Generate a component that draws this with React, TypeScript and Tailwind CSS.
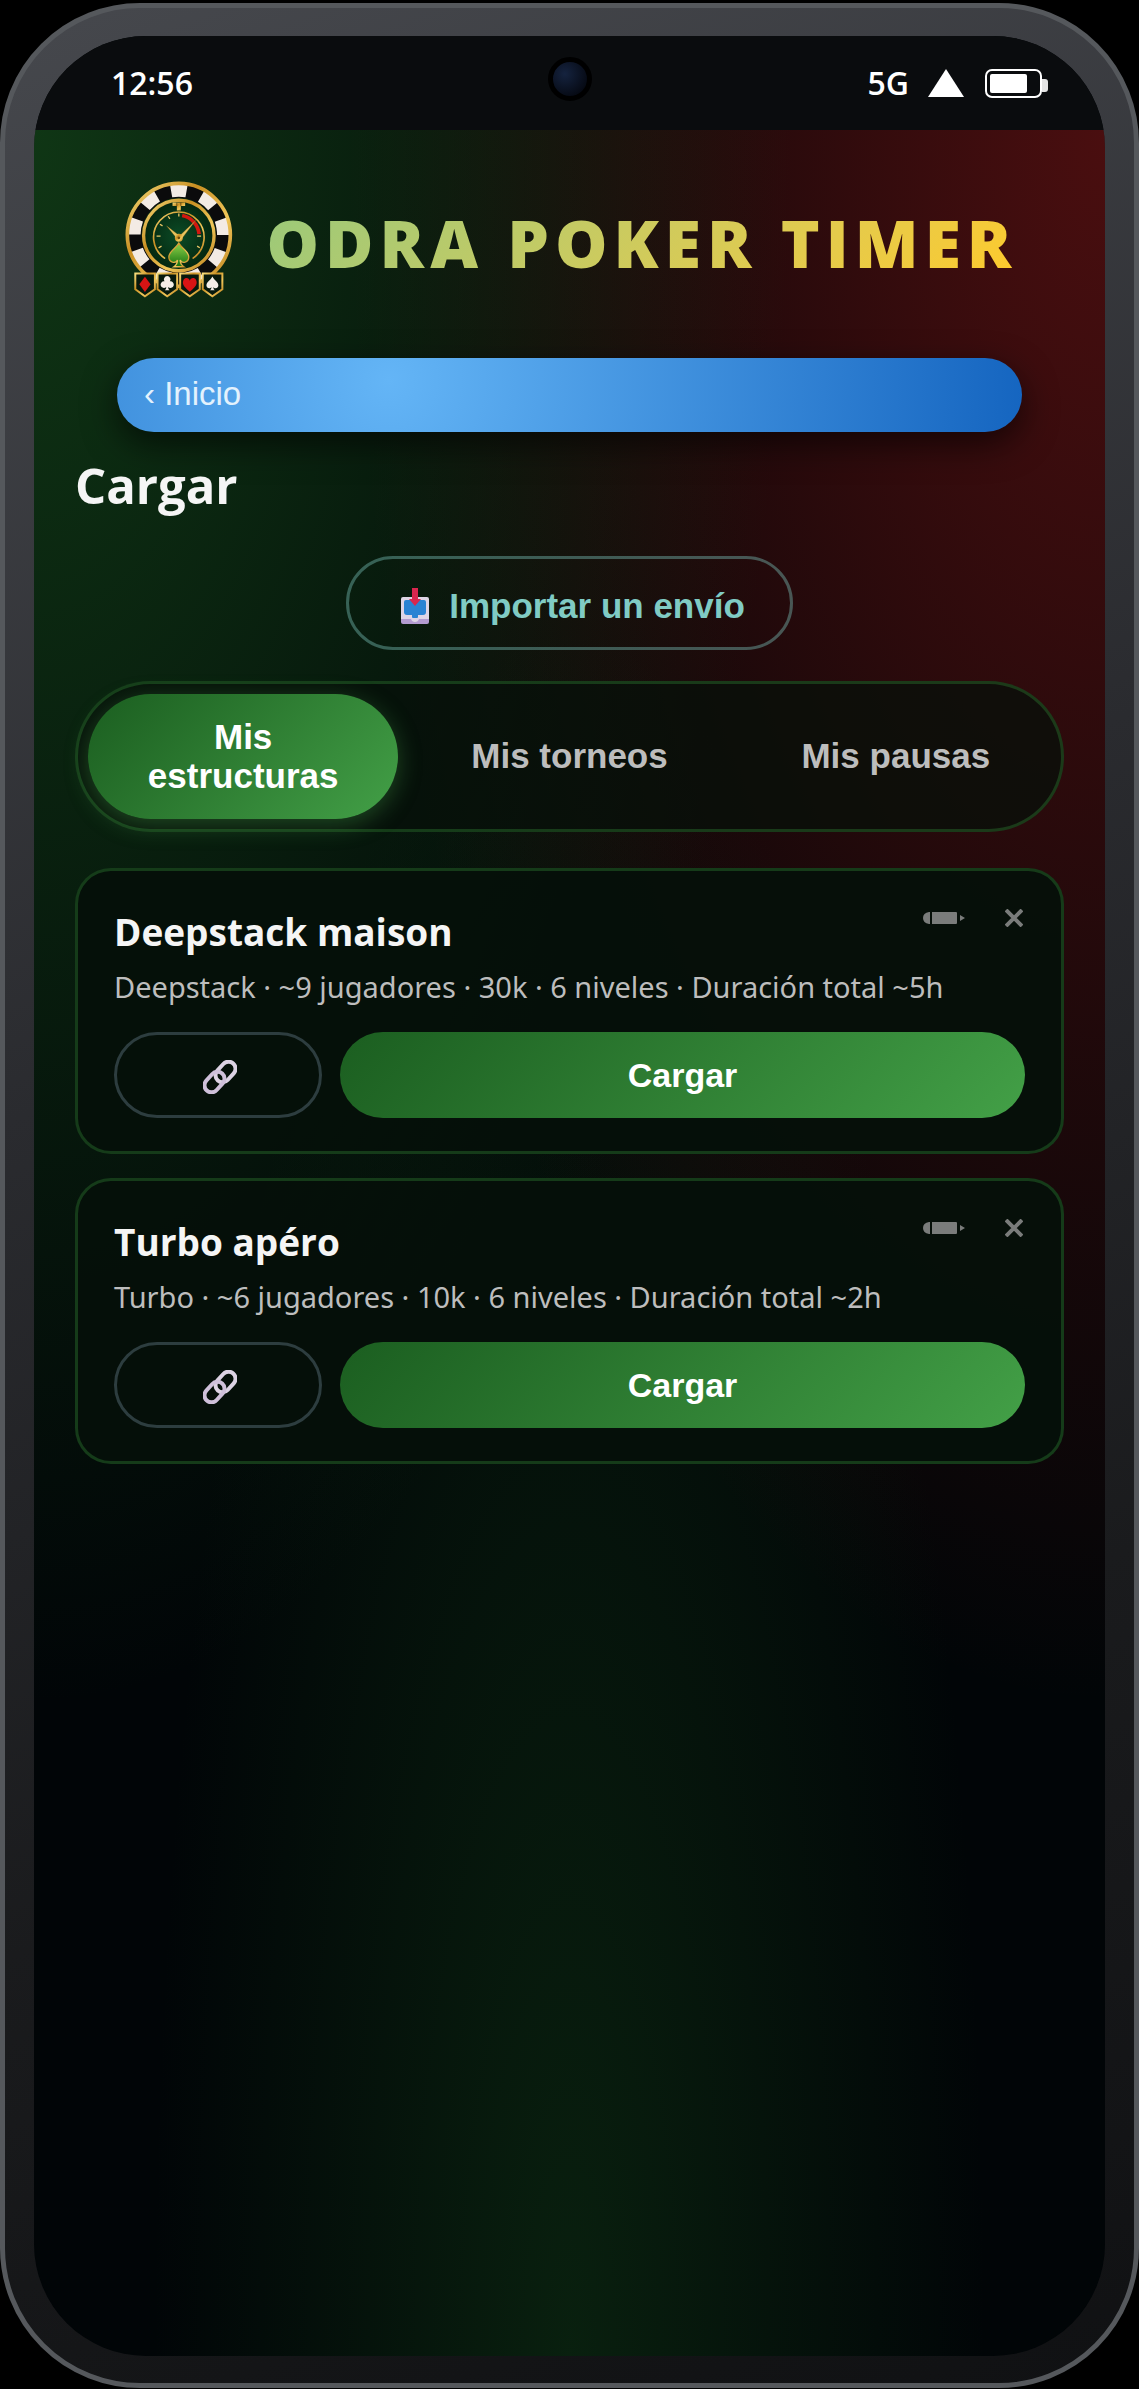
import { clsx } from "clsx";
import { useState } from "react";

interface ISaved {
  id: number;
  name: string;
  details: string;
}

const TABS = ["Mis estructuras", "Mis torneos", "Mis pausas"];

const STRUCTURES: ISaved[] = [
  {
    id: 1,
    name: "Deepstack maison",
    details: "Deepstack · ~9 jugadores · 30k · 6 niveles · Duración total ~5h",
  },
  {
    id: 2,
    name: "Turbo apéro",
    details: "Turbo · ~6 jugadores · 10k · 6 niveles · Duración total ~2h",
  },
];

const SHIELDS = [73, 140, 208, 276];

const Logo = () => (
  <svg viewBox="45 30 325 355" className="h-[118px] w-[108px] shrink-0" aria-hidden="true">
    <defs>
      <linearGradient id="gold" x1="0" y1="0" x2="1" y2="1">
        <stop offset="0" stopColor="#f6dc7c" />
        <stop offset="0.35" stopColor="#c98f22" />
        <stop offset="0.65" stopColor="#f0c75a" />
        <stop offset="1" stopColor="#b97a17" />
      </linearGradient>
      <linearGradient id="leaf" x1="0" y1="0" x2="0" y2="1">
        <stop offset="0" stopColor="#8fd24a" />
        <stop offset="1" stopColor="#14710f" />
      </linearGradient>
      <radialGradient id="felt">
        <stop offset="0" stopColor="#0b4a26" />
        <stop offset="1" stopColor="#04260f" />
      </radialGradient>
    </defs>
    <circle cx="207" cy="195" r="134" fill="none" stroke="#0b0b0c" strokeWidth="44" />
    <circle
      cx="207"
      cy="195"
      r="134"
      fill="none"
      stroke="#f3ebe4"
      strokeWidth="38"
      pathLength="18"
      strokeDasharray="1 1"
      transform="rotate(-100 207 195)"
    />
    <circle cx="207" cy="195" r="155" fill="none" stroke="url(#gold)" strokeWidth="11" />
    <circle cx="207" cy="197" r="107" fill="url(#felt)" stroke="#0b0b0c" strokeWidth="6" />
    <circle cx="207" cy="197" r="106" fill="none" stroke="url(#gold)" strokeWidth="10" />
    <path d="M188 98h38v10h-13v14h-12v-14h-13z" fill="url(#gold)" />
    <path d="M201 98v10M213 98v10" stroke="#3a2806" strokeWidth="2" />
    <path
      d="M164 265A76 76 0 1 1 250 265"
      fill="none"
      stroke="url(#gold)"
      strokeWidth="5"
      strokeLinecap="round"
    />
    <path d="M217 137A63 63 0 0 1 268 193" fill="none" stroke="#d3170f" strokeWidth="11" />
    <path
      d="M207 131v9M175 139l5 8M150 163l8 5M140 199h12M146 234l9-5M262 229l8 5M262 199h12"
      stroke="#e8c667"
      strokeWidth="4"
    />
    <path d="M170 168l42 32-8 10zM258 151l-44 58-9-7z" fill="#e9c45e" stroke="#8a6414" />
    <circle cx="207" cy="204" r="12" fill="url(#gold)" />
    <circle cx="207" cy="204" r="4" fill="#6b4a0c" />
    <path
      d="M207 220c8 16 30 24 30 42 0 17-20 20-26 9 0 10 3 15 11 20h-30c8-5 11-10 11-20-6 11-26 8-26-9 0-18 22-26 30-42z"
      fill="url(#leaf)"
      stroke="url(#gold)"
      strokeWidth="4"
    />
    {SHIELDS.map(x => (
      <path
        key={x}
        transform={`translate(${x} 308)`}
        d="M3 3h59v48L32 72 3 51z"
        fill="#07190d"
        stroke="url(#gold)"
        strokeWidth="6"
      />
    ))}
    <path d="M105 321l17 23-17 23-17-23z" fill="#d81414" />
    <path
      d="M172 319a10 10 0 0 1 8 16 10 10 0 1 1-5 17c0 5 1 7 4 10h-14c3-3 4-5 4-10a10 10 0 1 1-5-17 10 10 0 0 1 8-16z"
      fill="#f5efe8"
    />
    <path d="M240 366c-24-19-22-27-19-35 5-9 17-7 19 2 2-9 14-11 19-2 3 8 5 16-19 35z" fill="#d81414" />
    <path
      d="M308 320c5 11 18 16 18 27 0 10-12 11-15 5 0 5 1 7 4 10h-14c3-3 4-5 4-10-3 6-15 5-15-5 0-11 13-16 18-27z"
      fill="#f5efe8"
    />
  </svg>
);

const StatusBar = () => (
  <div className="relative flex h-[94px] items-center justify-between bg-[#0a0c0e] pr-[57px] pl-[77px] font-['Open_Sans','Noto_Sans',sans-serif] text-[32px] font-semibold text-white">
    <span>12:56</span>
    <span className="absolute top-[21px] left-1/2 size-[44px] -translate-x-1/2 rounded-full border-5 border-black bg-[radial-gradient(circle_at_35%_35%,#15233f,#060a14_75%)]" />
    <div className="flex items-center">
      <span>5G</span>
      <svg viewBox="0 0 36 28" className="ml-[19px] h-[28px] w-[36px]" aria-hidden="true">
        <path d="M18 0l18 28H0z" fill="#fff" />
      </svg>
      <svg viewBox="0 0 63 29" className="ml-[21px] h-[29px] w-[63px]" aria-hidden="true">
        <rect x="1" y="1" width="55" height="27" rx="6" fill="none" stroke="#fff" strokeWidth="2" />
        <rect x="5" y="5" width="37" height="19" rx="2" fill="#fff" />
        <path d="M57 10h3a3 3 0 0 1 3 3v7a3 3 0 0 1-3 3h-3z" fill="#e4e4e4" />
      </svg>
    </div>
  </div>
);

const InboxIcon = () => (
  <svg viewBox="0 0 28 36" className="h-[36px] w-[28px]" aria-hidden="true">
    <rect y="26" width="28" height="10" rx="2" fill="#b39bd0" />
    <path d="M2 9h24a2 2 0 0 1 2 2v20H18q-1 3-4 3t-4-3H0V11a2 2 0 0 1 2-2z" fill="#ded5e6" />
    <path d="M5 12h18a2 2 0 0 1 2 2v10a3 3 0 0 1-3 3h-5v2q0 1-1 1h-4q-1 0-1-1v-2H6a3 3 0 0 1-3-3V14a2 2 0 0 1 2-2z" fill="#2a83d3" />
    <path d="M11 0h6v11h3l-6 7-6-7h3z" fill="#d9264e" />
  </svg>
);

const LinkIcon = () => (
  <svg viewBox="0 0 34 34" className="h-[34px] w-[34px]" fill="none" strokeWidth="4" aria-hidden="true">
    <rect x="11" y="5" width="23" height="14" rx="7" transform="rotate(-48 22.5 12)" stroke="#dcd2e3" />
    <rect x="0" y="15" width="23" height="14" rx="7" transform="rotate(-48 11.5 22)" stroke="#cfc0da" />
  </svg>
);

const PencilIcon = () => (
  <svg viewBox="0 0 42 12" className="h-[12px] w-[42px]" fill="#7a7c7b" aria-hidden="true">
    <path d="M7 0v12H6Q0 11 0 6t6-6zM9 0h24q1 0 1 1v10q0 1-1 1H9zM37 3l5 3-5 3z" />
  </svg>
);

const CrossIcon = () => (
  <svg viewBox="0 0 18 18" className="size-[18px]" aria-hidden="true">
    <path d="M1 1l16 16M17 1L1 17" stroke="#7a7c7b" strokeWidth="4" />
  </svg>
);

const StructureCard = ({ item }: { item: ISaved }) => (
  <article className="relative rounded-[36px] border-3 border-[#2e7d32]/40 bg-[#05100a]/95 px-[36px] pt-[32px] pb-[33px]">
    <div className="absolute top-[34px] right-[38px] flex items-center gap-[40px]">
      <button type="button" aria-label={`Renombrar ${item.name}`} className="flex h-[26px] items-center">
        <PencilIcon />
      </button>
      <button type="button" aria-label={`Eliminar ${item.name}`} className="flex h-[26px] items-center">
        <CrossIcon />
      </button>
    </div>
    <h2 className="text-[37px] leading-[58px] font-bold text-[#f5f5f5]">{item.name}</h2>
    <p className="font-['Noto_Sans',sans-serif] text-[29px] leading-[52px] text-[#bdbdbd]">
      {item.details}
    </p>
    <div className="mt-[19px] flex gap-[18px]">
      <button
        type="button"
        aria-label="Compartir enlace"
        className="flex h-[86px] w-[208px] items-center justify-center rounded-full border-3 border-[#2d3d3f] pt-[4px] pl-[3px]"
      >
        <LinkIcon />
      </button>
      <button
        type="button"
        className="h-[86px] flex-1 rounded-full bg-linear-135 from-[#1b5e20] to-[#43a047] font-['Liberation_Sans',Arial,sans-serif] text-[34px] font-bold text-white"
      >
        Cargar
      </button>
    </div>
  </article>
);

export default function App() {
  const [tab, setTab] = useState(0);

  return (
    <div className="flex min-h-screen flex-col bg-black pt-[3px] pb-px font-['Open_Sans','Noto_Sans',sans-serif]">
      <div className="flex flex-1 flex-col rounded-[140px] border-5 border-[#55585c] bg-[linear-gradient(160deg,#46484d,#2a2b2f_40%,#1a1b1d_70%,#101113)] px-[29px] pt-[28px] pb-[27px]">
        <div className="flex flex-1 flex-col overflow-hidden rounded-[112px] bg-[#010507]">
          <StatusBar />
          <main className="flex-1 bg-[radial-gradient(ellipse_at_0%_0%,rgba(27,94,32,0.55),transparent_50%),radial-gradient(ellipse_at_100%_0%,rgba(183,28,28,0.4),transparent_50%),radial-gradient(ellipse_at_50%_100%,rgba(27,94,32,0.3),transparent_55%)] px-[41px] pt-[50px]">
            <header className="flex items-center justify-center gap-[33px] pl-[4px]">
              <Logo />
              <h1 className="bg-linear-135 from-[#98c97a] to-[#ffca28] bg-clip-text pt-[6px] text-[66px] leading-[90px] font-extrabold tracking-[6px] whitespace-nowrap text-transparent">
                ODRA POKER TIMER
              </h1>
            </header>

            <nav className="mt-[60px] px-[42px]">
              <a
                href="#inicio"
                className="flex h-[74px] items-center rounded-full bg-[radial-gradient(circle_at_30%_30%,#64b5f6,#1565c0)] px-[27px] pb-[3px] font-['Liberation_Sans',Arial,sans-serif] text-[33px] text-[#e3f2fd] shadow-[0_12px_34px_rgba(0,0,0,0.6)]"
              >
                ‹ Inicio
              </a>
            </nav>

            <h2 className="mt-[18px] text-[49px] leading-[70px] font-bold text-[#f5f5f5]">Cargar</h2>

            <div className="mt-[36px] flex justify-center">
              <button
                type="button"
                className="flex h-[94px] items-center gap-[20px] rounded-full border-3 border-[#80cbc4]/40 pt-[6px] pr-[45px] pl-[52px] font-['Liberation_Sans',Arial,sans-serif] text-[35px] font-bold text-[#80cbc4]"
              >
                <InboxIcon />
                Importar un envío
              </button>
            </div>

            <div
              role="tablist"
              className="mt-[31px] grid grid-cols-3 gap-[16px] rounded-full border-3 border-[#2e7d32]/40 bg-[#07100a]/75 p-[10px] font-['Liberation_Sans',Arial,sans-serif] text-[35px] leading-[39px] font-bold"
            >
              {TABS.map((label, i) => (
                <button
                  key={label}
                  type="button"
                  role="tab"
                  aria-selected={tab === i}
                  onClick={() => setTab(i)}
                  className={clsx(
                    "h-[125px] rounded-full px-[40px] pb-[2px]",
                    tab === i
                      ? "bg-linear-135 from-[#1b5e20] to-[#43a047] text-white shadow-[0_6px_23px_rgba(76,175,80,0.35)]"
                      : "text-[#bdbdbd]"
                  )}
                >
                  {label}
                </button>
              ))}
            </div>

            <section className="mt-[36px] flex flex-col gap-[24px]">
              {STRUCTURES.map(item => (
                <StructureCard key={item.id} item={item} />
              ))}
            </section>
          </main>
        </div>
      </div>
    </div>
  );
}
